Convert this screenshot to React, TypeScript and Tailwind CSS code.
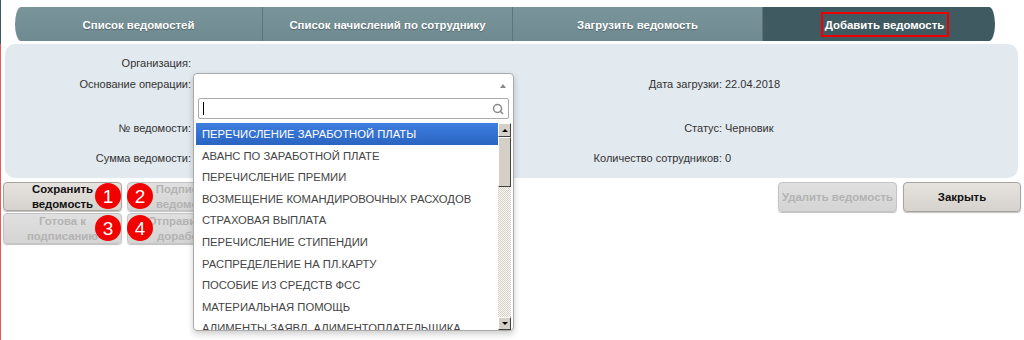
import { Search } from "lucide-react";

const tabs = [
  { title: "Список ведомостей", w: "w-[247px]" },
  { title: "Список начислений по сотруднику", w: "w-[250px]" },
  { title: "Загрузить ведомость", w: "w-[250px]" },
];

const options = [
  "ПЕРЕЧИСЛЕНИЕ ЗАРАБОТНОЙ ПЛАТЫ",
  "АВАНС ПО ЗАРАБОТНОЙ ПЛАТЕ",
  "ПЕРЕЧИСЛЕНИЕ ПРЕМИИ",
  "ВОЗМЕЩЕНИЕ КОМАНДИРОВОЧНЫХ РАСХОДОВ",
  "СТРАХОВАЯ ВЫПЛАТА",
  "ПЕРЕЧИСЛЕНИЕ СТИПЕНДИИ",
  "РАСПРЕДЕЛЕНИЕ НА ПЛ.КАРТУ",
  "ПОСОБИЕ ИЗ СРЕДСТВ ФСС",
  "МАТЕРИАЛЬНАЯ ПОМОЩЬ",
  "АЛИМЕНТЫ ЗАЯВЛ. АЛИМЕНТОПЛАТЕЛЬЩИКА",
];

function Badge({ n }: { n: number }) {
  return (
    <span className="flex h-[26px] w-[26px] items-center justify-center rounded-full bg-[#f20000] text-[19px] leading-none text-white">
      {n}
    </span>
  );
}

function Btn({
  lines,
  disabled,
  w = "w-[119px]",
  h = "h-[29px]",
}: {
  lines: string[];
  disabled?: boolean;
  w?: string;
  h?: string;
}) {
  return (
    <div
      className={`flex ${w} ${h} flex-col items-center justify-center whitespace-nowrap rounded-[4px] border text-[11.4px] font-bold leading-[15px] shadow-[0_1px_1px_rgba(0,0,0,0.25)] ${
        disabled
          ? "border-[#c4c4c4] bg-gradient-to-b from-[#e0e0e0] to-[#d4d4d4] text-[#b3b3b3]"
          : "border-[#a8a4a0] bg-gradient-to-b from-[#e6e2de] to-[#d6d2ce] text-[#111]"
      }`}
    >
      {lines.map((l) => (
        <span key={l}>{l}</span>
      ))}
    </div>
  );
}

function InfoRow({
  label,
  label2,
  value2,
  className = "",
}: {
  label: string;
  label2?: string;
  value2?: string;
  className?: string;
}) {
  return (
    <div className={`flex h-[21px] items-center ${className}`}>
      <div className="w-[186px] text-right">{label}</div>
      <div className="w-[330px]" />
      <div className="w-[201px] text-right">{label2}</div>
      <div className="pl-[3px]">{value2}</div>
    </div>
  );
}

export default function App() {
  return (
    <div className="relative flex h-[340px] w-[1024px] flex-col overflow-hidden bg-white font-['Liberation_Sans',Arial,sans-serif] text-[11px] text-[#333]">
      {/* tabs */}
      <div className="h-[44px] border-l border-[#3d5a60] pt-[7px]">
        <div className="ml-[14px] flex h-[34px] w-[980px] text-[11.4px]">
          {tabs.map((t, i) => (
            <div
              key={t.title}
              className={`flex ${t.w} items-center justify-center whitespace-nowrap bg-gradient-to-b from-[#7a959a] to-[#6f8a90] pt-[3px] font-bold text-white [text-shadow:0_1px_1px_rgba(0,0,0,0.3)] ${
                i === 0
                  ? "rounded-tl-[6px_17px] rounded-bl-[6px_17px]"
                  : "border-l border-[#5b757a]"
              }`}
            >
              {t.title}
            </div>
          ))}
          <div className="flex w-[233px] items-center justify-center whitespace-nowrap rounded-tr-[6px_17px] rounded-br-[6px_17px] border-l border-[#5b757a] bg-[#3f5a61] font-bold text-white">
            <div className="ml-[11px] mt-[1px] flex h-[25px] w-[128px] items-center justify-center border-2 border-[#ee0000] pt-[2px]">
              Добавить ведомость
            </div>
          </div>
        </div>
      </div>

      {/* body */}
      <div className="relative flex-1 border-l border-[#e85a5a]">
        <div className="ml-[4px] mr-[6px] h-[134px] rounded-[10px] bg-[#e2e9ef] pt-[9px]">
          <InfoRow label="Организация:" />
          <InfoRow label="Основание операции:" label2="Дата загрузки:" value2="22.04.2018" />
          <InfoRow className="mt-[23px]" label="№ ведомости:" label2="Статус:" value2="Черновик" />
          <InfoRow className="mt-[9px]" label="Сумма ведомости:" label2="Количество сотрудников:" value2="0" />
        </div>

        <div className="mt-[4px] flex justify-between pl-[2px] pr-[3px]">
          <div className="flex flex-col gap-[2px]">
            <div className="flex gap-[5px]">
              <div className="relative">
                <Btn lines={["Сохранить", "ведомость"]} />
                <div className="absolute left-[92px] top-px"><Badge n={1} /></div>
              </div>
              <div className="relative">
                <Btn lines={["Подписать", "ведомость"]} disabled />
                <div className="absolute left-0 top-px"><Badge n={2} /></div>
              </div>
            </div>
            <div className="flex gap-[5px]">
              <div className="relative">
                <Btn lines={["Готова к", "подписанию"]} disabled h="h-[31px]" />
                <div className="absolute left-[92px] top-[2px]"><Badge n={3} /></div>
              </div>
              <div className="relative">
                <Btn lines={["Отправить на", "доработку"]} disabled h="h-[31px]" />
                <div className="absolute left-0 top-[2px]"><Badge n={4} /></div>
              </div>
            </div>
          </div>
          <div className="flex gap-[6px]">
            <Btn lines={["Удалить ведомость"]} disabled h="h-[30px]" />
            <Btn lines={["Закрыть"]} w="w-[118px]" h="h-[30px]" />
          </div>
        </div>

        {/* open select */}
        <div className="absolute left-[192px] top-[29px] flex h-[258px] w-[321px] flex-col rounded-[4px] border border-[#aaa] bg-white text-[11.25px] shadow-[0_3px_6px_rgba(0,0,0,0.2)]">
          <div className="flex h-[24px] items-center justify-end pr-[7px]">
            <span className="h-0 w-0 border-x-[3px] border-b-[4px] border-x-transparent border-b-[#888]" />
          </div>
          <div className="mx-[4px] flex h-[21px] items-center rounded-[2px] border border-[#aaa] px-[4px]">
            <span className="h-[13px] w-px bg-black" />
            <Search className="ml-auto h-[12px] w-[12px] text-[#888]" strokeWidth={3} />
          </div>
          <div className="mx-[2px] mt-[4px] flex min-h-0 flex-1">
            <div className="flex-1 overflow-hidden">
              {options.map((o, i) => (
                <div
                  key={o}
                  className={`h-[21.6px] whitespace-nowrap pl-[6px] leading-[22px] ${
                    i === 0 ? "bg-gradient-to-b from-[#3e7fe0] to-[#2a63c1] text-white" : "text-[#444]"
                  }`}
                >
                  {o}
                </div>
              ))}
            </div>
            <div className="flex w-[13px] flex-col">
              <div className="flex h-[14px] items-center justify-center border border-b-[#404040] border-l-white border-r-[#404040] border-t-white bg-[#d4d0c8]">
                <span className="h-0 w-0 border-x-[3px] border-b-[3px] border-x-transparent border-b-black" />
              </div>
              <div className="h-[50px] border border-b-[#404040] border-l-white border-r-[#404040] border-t-white bg-[#d4d0c8]" />
              <div className="flex-1 bg-[repeating-conic-gradient(#d4d0c8_0%_25%,#f8f8f8_0%_50%)] bg-[length:2px_2px]" />
              <div className="flex h-[13px] items-center justify-center border border-b-[#404040] border-l-white border-r-[#404040] border-t-white bg-[#d4d0c8]">
                <span className="h-0 w-0 border-x-[3px] border-t-[3px] border-x-transparent border-t-black" />
              </div>
            </div>
          </div>
        </div>
      </div>
    </div>
  );
}
